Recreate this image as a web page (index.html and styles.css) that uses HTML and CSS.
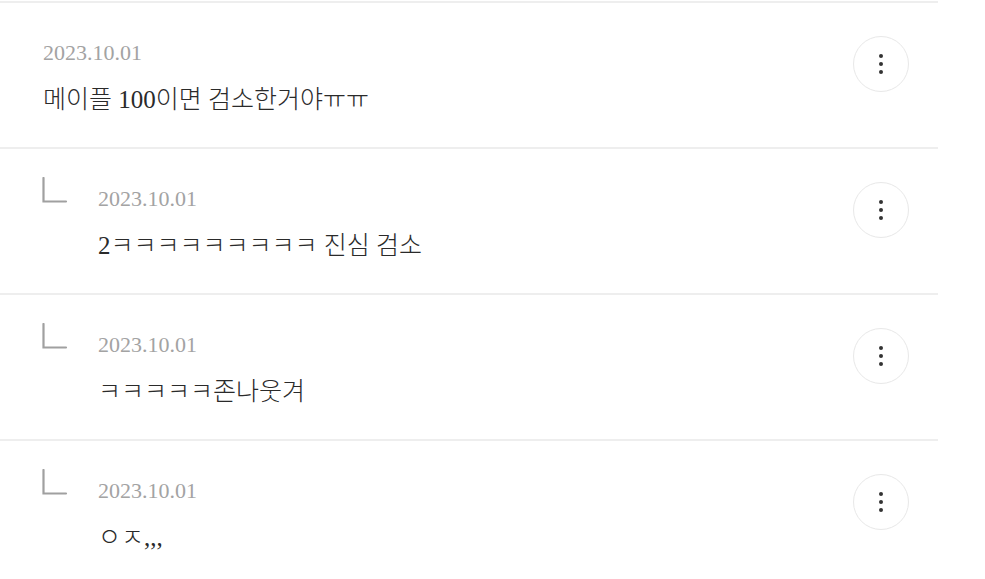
FILE: index.html
```html
<!DOCTYPE html>
<html lang="ko">
  <head>
    <meta charset="UTF-8" />
    <meta name="viewport" content="width=device-width, initial-scale=1.0" />
    <title>comments</title>
    <link rel="stylesheet" href="styles.css">
  </head>
  <body>
    <ul class="comments">
      <li class="comment">
        <div class="comment-body">
          <span class="date">2023.10.01</span>
          <p class="text">메이플 100이면 검소한거야ㅠㅠ</p>
        </div>
        <button class="more" type="button"><span></span><span></span><span></span></button>
      </li>
      <li class="comment reply">
        <svg class="reply-mark" width="26" height="26" viewBox="0 0 26 26">
          <path d="M1.5 1 V24.5 H24" fill="none" stroke="#a0a0a0" stroke-width="2.2" stroke-linecap="round" />
        </svg>
        <div class="comment-body">
          <span class="date">2023.10.01</span>
          <p class="text">2ㅋㅋㅋㅋㅋㅋㅋㅋㅋ 진심 검소</p>
        </div>
        <button class="more" type="button"><span></span><span></span><span></span></button>
      </li>
      <li class="comment reply">
        <svg class="reply-mark" width="26" height="26" viewBox="0 0 26 26">
          <path d="M1.5 1 V24.5 H24" fill="none" stroke="#a0a0a0" stroke-width="2.2" stroke-linecap="round" />
        </svg>
        <div class="comment-body">
          <span class="date">2023.10.01</span>
          <p class="text">ㅋㅋㅋㅋㅋ존나웃겨</p>
        </div>
        <button class="more" type="button"><span></span><span></span><span></span></button>
      </li>
      <li class="comment reply">
        <svg class="reply-mark" width="26" height="26" viewBox="0 0 26 26">
          <path d="M1.5 1 V24.5 H24" fill="none" stroke="#a0a0a0" stroke-width="2.2" stroke-linecap="round" />
        </svg>
        <div class="comment-body">
          <span class="date">2023.10.01</span>
          <p class="text">ㅇㅈ,,,</p>
        </div>
        <button class="more" type="button"><span></span><span></span><span></span></button>
      </li>
    </ul>
  </body>
</html>
```

FILE: styles.css
```css
body {
  margin: 0;
  font-family: "Liberation Serif", "Noto Sans CJK KR", serif;
  background-color: #ffffff;
  overflow: hidden;
}
.comments {
  list-style: none;
  margin: 1px 0 0;
  padding: 0;
  width: 938px;
}
.comment {
  display: flex;
  align-items: flex-start;
  height: 146px;
  box-sizing: border-box;
  border-top: 2px solid #eeeeee;
  padding: 33px 29px 0 43px;
}
.reply-mark {
  flex: none;
  margin: -5px 30px 0 -1px;
}
.comment-body {
  padding-top: 2px;
}
.date {
  display: block;
  font-size: 22px;
  line-height: 30px;
  color: #a3a3a3;
}
.text {
  margin: 15px 0 0;
  font-size: 25px;
  font-weight: 300;
  line-height: 34px;
  color: #2a2a2a;
}
.more {
  margin-left: auto;
  flex: none;
  width: 56px;
  height: 56px;
  padding: 0;
  border: 1px solid #e8e8e8;
  border-radius: 50%;
  background: #ffffff;
  display: flex;
  flex-direction: column;
  align-items: center;
  justify-content: center;
  gap: 4px;
  cursor: pointer;
}
.more span {
  width: 4px;
  height: 4px;
  border-radius: 50%;
  background: #333333;
}
```
